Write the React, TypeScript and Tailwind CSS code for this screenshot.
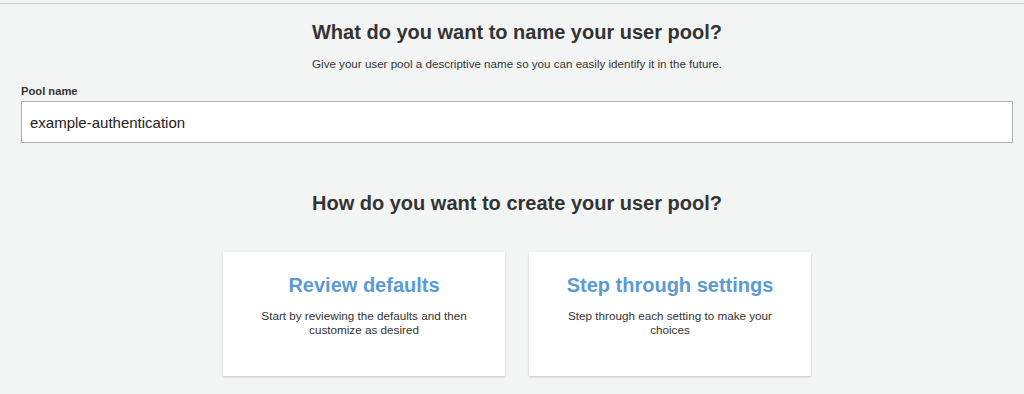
export default function App() {
  const options = [
    {
      title: "Review defaults",
      text: "Start by reviewing the defaults and then customize as desired",
    },
    {
      title: "Step through settings",
      text: "Step through each setting to make your choices",
    },
  ];

  return (
    <div
      className="h-[394px] w-[1024px] overflow-hidden bg-[#f3f4f4] text-[#333]"
      style={{ fontFamily: '"Liberation Sans", Arial, sans-serif' }}
    >
      <div className="mt-[3px] h-px bg-[#cfd0d0]" />
      <div className="pl-[21px] pr-[11px]">
        {/* Pool name */}
        <h1 className="mt-[16px] text-center text-[20px] font-bold leading-[24px]">
          What do you want to name your user pool?
        </h1>
        <p className="mt-[13px] text-center text-[11.6px] leading-[14px]">
          Give your user pool a descriptive name so you can easily identify it in the future.
        </p>
        <label className="mt-[13px] block text-[11.2px] font-bold leading-[14px]">Pool name</label>
        <input
          readOnly
          value="example-authentication"
          className="mt-[3px] block h-[42px] w-full border border-[#aab0b0] bg-white px-2 text-[15px] text-[#222] outline-none"
        />

        {/* Create options */}
        <h2 className="mt-[48px] text-center text-[20px] font-bold leading-[24px]">
          How do you want to create your user pool?
        </h2>
        <div className="mt-[37px] flex justify-center gap-[24px]">
          {options.map((o) => (
            <div
              key={o.title}
              className="flex h-[124px] w-[282px] flex-col items-center bg-white px-8 pt-[21px] shadow-[0_1px_2px_rgba(0,0,0,0.2)]"
            >
              <h3 className="text-[20px] font-bold leading-[24px] text-[#5a9bd5]">{o.title}</h3>
              <p className="mt-[12px] text-center text-[11.7px] leading-[14px]">{o.text}</p>
            </div>
          ))}
        </div>
      </div>
    </div>
  );
}
